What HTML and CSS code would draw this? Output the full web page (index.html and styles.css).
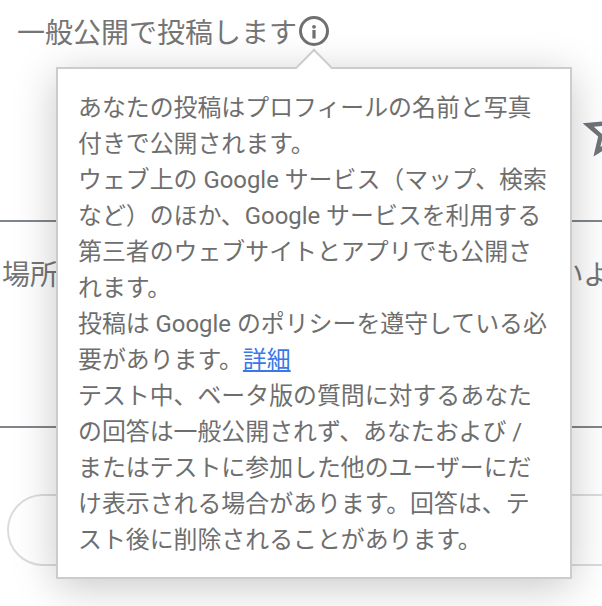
FILE: index.html
```html
<!DOCTYPE html>
<html lang="ja">
  <head>
    <meta charset="UTF-8" />
    <meta name="viewport" content="width=device-width, initial-scale=1.0" />
    <title>一般公開で投稿します</title>
    <link rel="stylesheet" href="styles.css">
  </head>
  <body>
    <div class="page">
      <header class="heading">
        <h1>一般公開で投稿します</h1>
        <svg class="info-icon" width="32" height="32" viewBox="0 0 32 32" aria-hidden="true">
          <circle cx="16" cy="16" r="13.5" fill="none" stroke="#707070" stroke-width="3" />
          <circle cx="16" cy="11.8" r="1.9" fill="#707070" />
          <rect x="14.4" y="15" width="3.2" height="8.5" fill="#707070" />
        </svg>
      </header>
      <div class="rating">
        <svg class="star" width="68" height="68" viewBox="0 0 24 24" aria-hidden="true">
          <path fill="#70757a" d="M22 9.24l-7.19-.62L12 2 9.19 8.63 2 9.24l5.46 4.73L5.82 21 12 17.27 18.18 21l-1.63-7.03L22 9.24zM12 15.4l-3.76 2.27 1-4.28-3.32-2.88 4.38-.38L12 6.1l1.71 4.04 4.38.38-3.32 2.88 1 4.28L12 15.4z" />
        </svg>
      </div>
      <div class="place-row">
        <span>場所</span>
        <span class="place-hint">いよ</span>
      </div>
      <div class="answer">
        <div class="pill"></div>
      </div>
    </div>

    <div class="popup">
      <div class="popup-arrow"></div>
      <p>あなたの投稿はプロフィールの名前と写真付きで公開されます。</p>
      <p>ウェブ上の Google サービス（マップ、検索など）のほか、Google サービスを利用する第三者のウェブサイトとアプリでも公開されます。</p>
      <p>投稿は Google のポリシーを遵守している必要があります。<a href="#">詳細</a></p>
      <p>テスト中、ベータ版の質問に対するあなたの回答は一般公開されず、あなたおよび / またはテストに参加した他のユーザーにだけ表示される場合があります。回答は、テスト後に削除されることがあります。</p>
    </div>
  </body>
</html>
```

FILE: styles.css
```css
/* Base */
body {
  margin: 0;
  height: 606px;
  overflow: hidden;
  position: relative;
  background: #fff;
  font-family: Roboto, "Noto Sans CJK JP", sans-serif;
  color: #757575;
}

/* Page behind the popup */
.page {
  display: flex;
  flex-direction: column;
}
.heading {
  display: flex;
  align-items: center;
  gap: 1px;
  height: 62px;
  padding-left: 17px;
}
.heading h1 {
  margin: 0;
  font-size: 28px;
  font-weight: 400;
}
.rating {
  display: flex;
  justify-content: flex-end;
  align-items: flex-start;
  height: 160px;
  padding-top: 35px;
  box-sizing: border-box;
  overflow: hidden;
  border-bottom: 2px solid #80868b;
}
.star {
  flex: none;
  margin-right: -43px;
}
.place-row {
  display: flex;
  justify-content: space-between;
  align-items: flex-start;
  height: 206px;
  padding-left: 2px;
  box-sizing: border-box;
  overflow: hidden;
  border-bottom: 2px solid #80868b;
  font-size: 28px;
  line-height: 108px;
}
.place-hint {
  flex: none;
  margin-right: -9px;
}
.answer {
  padding: 66px 0 0 7px;
  overflow: hidden;
}
.pill {
  height: 68px;
  margin-right: -60px;
  border: 2px solid #dadce0;
  border-radius: 36px;
}

/* Popup */
.popup {
  position: absolute;
  left: 56px;
  top: 67px;
  width: 516px;
  height: 512px;
  box-sizing: border-box;
  padding: 21px 20px 0;
  background: #fff;
  border: 2px solid #ccc;
  box-shadow: 0 8px 40px rgba(0, 0, 0, 0.22);
  font-size: 23.9px;
  line-height: 36px;
  color: #6e6e6e;
}
.popup p {
  margin: 0;
}
.popup a {
  color: #3b78e7;
}
.popup-arrow {
  position: absolute;
  left: 242.5px;
  top: -15.3px;
  width: 26px;
  height: 26px;
  box-sizing: border-box;
  background: #fff;
  border-left: 2px solid #ccc;
  border-top: 2px solid #ccc;
  transform: rotate(45deg);
}
```
